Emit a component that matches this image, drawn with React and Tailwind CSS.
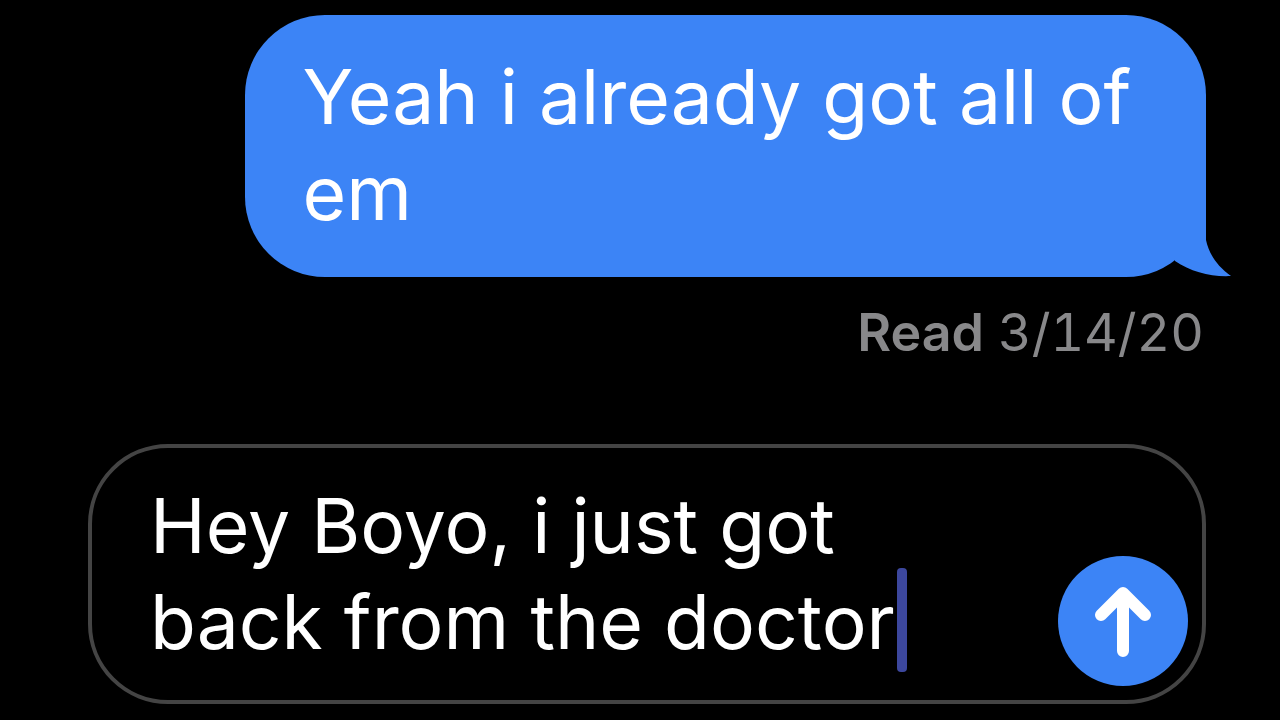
import { useState } from 'react'

function BubbleTail() {
  return (
    <svg viewBox="0 0 90 80" aria-hidden="true" className="absolute -right-[25px] bottom-0 h-[80px] w-[90px] fill-[#3c84f6]">
      <path d="M34 0 H65 V43 C68 57 76 69 90 79 C70 80 50 75 34 64 Z" />
    </svg>
  )
}

function SentMessage({ text, readAt }) {
  return (
    <div className="ml-auto flex w-[86%] flex-col items-end">
      <div className="relative w-full rounded-[80px] bg-[#3c84f6] px-[58px] pt-[34px] pb-[36px]">
        <p className="text-[75px] leading-[96px] text-white">{text}</p>
        <BubbleTail />
      </div>
      <p className="mt-[28px] pr-[2px] text-[52px] leading-[56px] text-[#88888a] tabular-nums">
        <span className="font-semibold">Read</span> {readAt}
      </p>
    </div>
  )
}

function Composer() {
  const [draft, setDraft] = useState('Hey Boyo, i just got\nback from the doctor')

  return (
    <form
      onSubmit={(e) => e.preventDefault()}
      className="relative flex items-end rounded-[80px] border-4 border-[#444444] py-[30px] pr-[14px] pl-[58px]"
    >
      <textarea
        aria-label="Message"
        rows={2}
        value={draft}
        onChange={(e) => setDraft(e.target.value)}
        className="block min-w-0 flex-1 resize-none overflow-hidden bg-transparent text-[75px] leading-[96px] text-white caret-transparent outline-none"
      />
      <button type="submit" aria-label="Send" className="-mb-[16px] flex size-[130px] shrink-0 items-center justify-center rounded-full bg-[#3c84f6]">
        <svg viewBox="0 0 60 76" aria-hidden="true" className="h-[76px] w-[60px] fill-none stroke-white stroke-[12]" strokeLinecap="round" strokeLinejoin="round">
          <path d="M30 68 V10 M8 32 L30 10 L52 32" />
        </svg>
      </button>
      <span className="absolute top-[120px] left-[805px] h-[104px] w-[10px] rounded-sm bg-[#3f4ba5]/95" />
    </form>
  )
}

export default function App() {
  return (
    <main className="min-h-screen bg-black pt-[15px] pr-[74px] pl-[88px] font-['Inter',sans-serif]">
      <SentMessage text="Yeah i already got all of em" readAt="3/14/20" />
      <div className="mt-[83px]">
        <Composer />
      </div>
    </main>
  )
}
